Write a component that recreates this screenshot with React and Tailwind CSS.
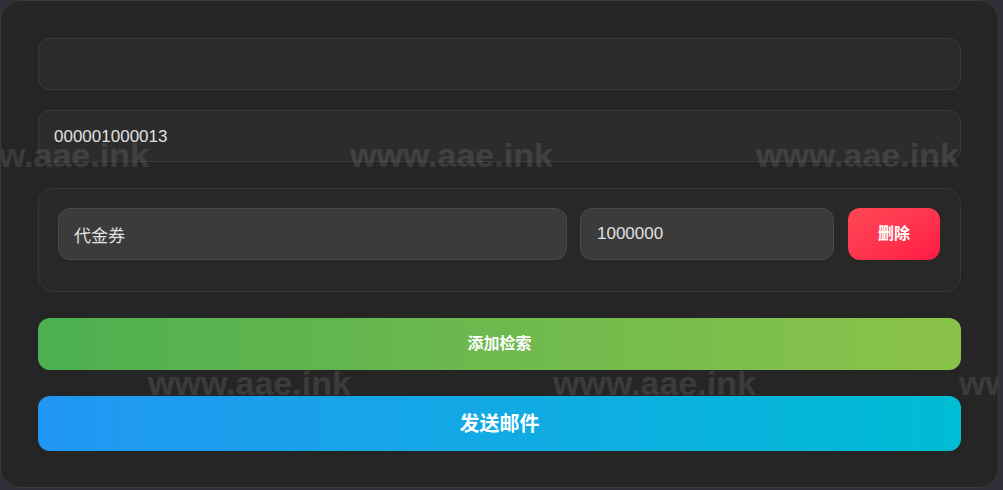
import React, { useState } from 'react';

const font = { fontFamily: '"Liberation Sans", "Noto Sans CJK SC", sans-serif' };

// watermark grid, lies over the whole card
const marks = [
    { left: -55, top: 137 },
    { left: 349, top: 137 },
    { left: 755, top: 137 },
    { left: 147, top: 365 },
    { left: 552, top: 365 },
    { left: 958, top: 365 },
];

const App = () => {

    const [title, setTitle] = useState('');
    const [uid, setUid] = useState('000001000013');
    const [items, setItems] = useState([{ name: '代金券', count: '1000000' }]);

    const updateItem = (index, key, value) => {
        setItems(items.map((item, i) => (i === index ? { ...item, [key]: value } : item)));
    };

    const removeItem = (index) => {
        setItems(items.filter((_, i) => i !== index));
    };

    const addItem = () => {
        setItems([...items, { name: '', count: '' }]);
    };

  return (
    <div className="w-[1003px] h-[490px] bg-[#2d2e38] overflow-hidden" style={font}>

        <div className="relative w-[999px] h-[488px] bg-[#252525] border border-[#3a3a3f] rounded-[20px] px-[37px] pt-[37px] flex flex-col overflow-hidden">

            <input
                type="text"
                className="h-[52px] w-full shrink-0 rounded-xl border border-[#3a3a3a] bg-[#2c2c2c] px-4 text-[17px] text-[#e0e0e0] outline-none"
                value={title}
                onChange={(e) => setTitle(e.target.value)}
            />

            <input
                type="text"
                className="mt-5 h-[52px] w-full shrink-0 rounded-xl border border-[#3a3a3a] bg-[#2c2c2c] px-[15px] pt-px text-[17px] text-[#e0e0e0] outline-none"
                value={uid}
                onChange={(e) => setUid(e.target.value)}
            />

            {/* Item rows */}
            {items.map((item, index) => (
                <div key={index} className="mt-[26px] flex shrink-0 items-center gap-[13px] rounded-2xl border border-[#383838] bg-[#282828] pl-[19px] pr-5 pt-[19px] pb-[31px]">
                    <input
                        type="text"
                        className="h-[52px] w-[509px] rounded-xl border border-[#4a4a4a] bg-[#3b3b3b] px-[15px] text-[17px] text-[#e0e0e0] outline-none"
                        value={item.name}
                        onChange={(e) => updateItem(index, 'name', e.target.value)}
                    />
                    <input
                        type="text"
                        className="h-[52px] w-[254px] rounded-xl border border-[#4a4a4a] bg-[#3b3b3b] px-4 text-[17px] text-[#e0e0e0] outline-none"
                        value={item.count}
                        onChange={(e) => updateItem(index, 'count', e.target.value)}
                    />
                    <button
                        className="ml-px h-[52px] w-[92px] rounded-xl bg-gradient-to-br from-[#ff4757] to-[#ff1744] text-base font-bold text-white"
                        onClick={() => removeItem(index)}
                    >
                        删除
                    </button>
                </div>
            ))}

            <button
                className="mt-[26px] h-[52px] w-full shrink-0 rounded-xl bg-gradient-to-r from-[#4caf50] to-[#8bc34a] text-base font-bold text-white"
                onClick={addItem}
            >
                添加检索
            </button>

            <button className="mt-[26px] h-[55px] w-full shrink-0 rounded-xl bg-gradient-to-r from-[#2196f3] to-[#00bcd4] text-xl font-bold text-white">
                发送邮件
            </button>

            {/* Watermark */}
            <div className="pointer-events-none absolute inset-0">
                {marks.map((m, i) => (
                    <div
                        key={i}
                        className="absolute whitespace-nowrap text-[34px] font-bold leading-none text-white/10"
                        style={{ left: m.left, top: m.top }}
                    >
                        www.aae.ink
                    </div>
                ))}
            </div>

        </div>
    </div>
  )
}

export default App
